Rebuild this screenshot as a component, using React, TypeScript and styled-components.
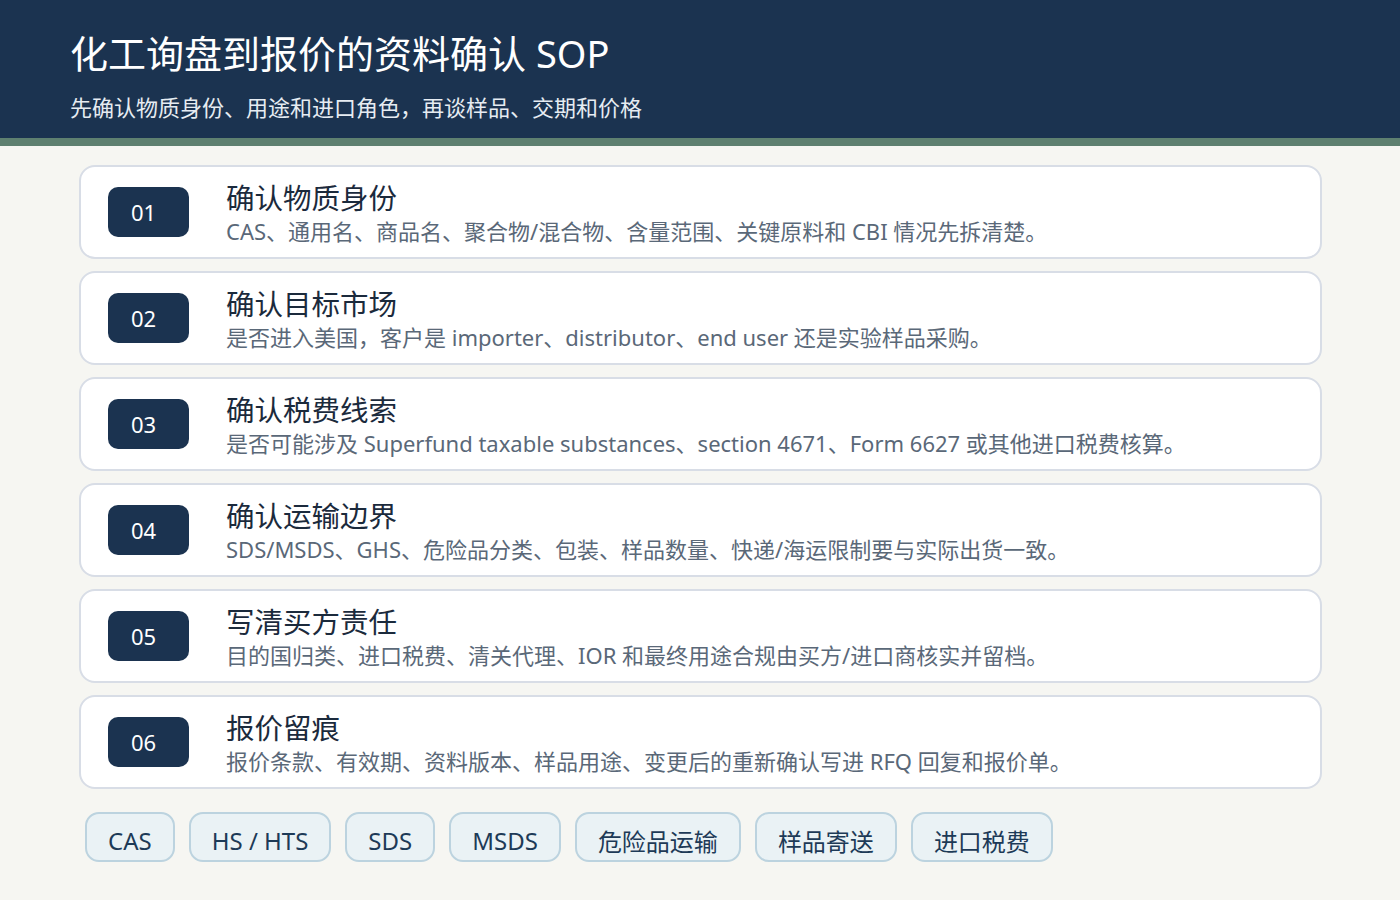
import React from "react";
import styled, { createGlobalStyle } from "styled-components";

const steps = [
  { no: "01", title: "确认物质身份", desc: "CAS、通用名、商品名、聚合物/混合物、含量范围、关键原料和 CBI 情况先拆清楚。" },
  { no: "02", title: "确认目标市场", desc: "是否进入美国，客户是 importer、distributor、end user 还是实验样品采购。" },
  { no: "03", title: "确认税费线索", desc: "是否可能涉及 Superfund taxable substances、section 4671、Form 6627 或其他进口税费核算。" },
  { no: "04", title: "确认运输边界", desc: "SDS/MSDS、GHS、危险品分类、包装、样品数量、快递/海运限制要与实际出货一致。" },
  { no: "05", title: "写清买方责任", desc: "目的国归类、进口税费、清关代理、IOR 和最终用途合规由买方/进口商核实并留档。" },
  { no: "06", title: "报价留痕", desc: "报价条款、有效期、资料版本、样品用途、变更后的重新确认写进 RFQ 回复和报价单。" },
];

const tags = ["CAS", "HS / HTS", "SDS", "MSDS", "危险品运输", "样品寄送", "进口税费"];

const App: React.FC = () => (
  <>
    <GlobalStyle />
    <Header>
      <Title>化工询盘到报价的资料确认 SOP</Title>
      <Subtitle>先确认物质身份、用途和进口角色，再谈样品、交期和价格</Subtitle>
    </Header>
    <Main>
      {steps.map((s) => (
        <Card key={s.no}>
          <Badge>{s.no}</Badge>
          <Body>
            <StepTitle>{s.title}</StepTitle>
            <StepDesc>{s.desc}</StepDesc>
          </Body>
        </Card>
      ))}
      <Tags>
        {tags.map((t) => (
          <Tag key={t}>{t}</Tag>
        ))}
      </Tags>
    </Main>
  </>
);

export default App;

const GlobalStyle = createGlobalStyle`
  body {
    margin: 0;
    background: #f6f6f2;
    font-family: "Noto Sans", "Noto Sans CJK SC", sans-serif;
  }
`;

const Header = styled.header`
  background: #1b3350;
  border-bottom: 8px solid #5e8070;
  padding: 26px 70px 0;
  height: 112px;
  box-sizing: content-box;
`;

const Title = styled.h1`
  margin: 0;
  color: #fff;
  font-size: 38px;
  font-weight: 400;
  line-height: 54px;
`;

const Subtitle = styled.div`
  margin-top: 12px;
  color: #e6ecf2;
  font-size: 22px;
  line-height: 30px;
`;

const Main = styled.main`
  padding: 19px 78px 0 79px;
  display: flex;
  flex-direction: column;
  gap: 12px;
`;

const Card = styled.div`
  height: 94px;
  box-sizing: border-box;
  background: #fff;
  border: 2px solid #d8dde6;
  border-radius: 16px;
  display: flex;
  align-items: center;
  padding: 0 0 0 27px;
`;

const Badge = styled.div`
  width: 81px;
  height: 50px;
  border-radius: 10px;
  background: #1b3350;
  color: #fff;
  font-size: 22px;
  display: flex;
  align-items: center;
  justify-content: center;
  padding-right: 10px;
  box-sizing: border-box;
  flex-shrink: 0;
`;

const Body = styled.div`
  margin-left: 37px;
  display: flex;
  flex-direction: column;
  margin-top: 2px;
`;

const StepTitle = styled.div`
  color: #1b2a3c;
  font-size: 28.5px;
  line-height: 36px;
`;

const StepDesc = styled.div`
  color: #5a6878;
  font-size: 22px;
  line-height: 30px;
`;

const Tags = styled.div`
  display: flex;
  gap: 14px;
  margin: 11px 0 0 6px;
`;

const Tag = styled.div`
  height: 50px;
  box-sizing: border-box;
  padding: 6px 21px 0;
  border: 2px solid #bcd3df;
  border-radius: 14px;
  background: #eaf2f5;
  color: #1d3a57;
  font-size: 24px;
  display: flex;
  align-items: center;
`;
